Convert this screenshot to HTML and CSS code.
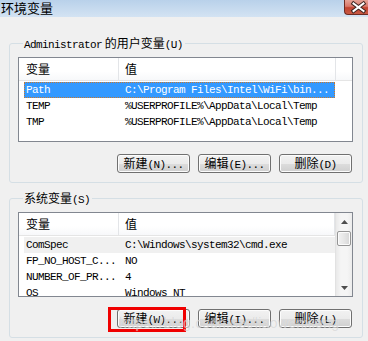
FILE: index.html
```html
<!DOCTYPE html>
<html lang="zh-CN">
<head>
    <meta charset="UTF-8">
    <title>环境变量</title>
    <link rel="stylesheet" href="styles.css">
</head>
<body>

    <div class="window">
        <!-- Title bar -->
        <div class="titlebar">
            <span class="title">环境变量</span>
            <div class="close">
                <svg width="25" height="15" viewBox="0 0 25 15">
                    <path d="M9.5 3.5 L19.5 11 M19.5 3.5 L9.5 11" stroke="#3b2420" stroke-width="4" stroke-linecap="square"/>
                    <path d="M9.5 3.5 L19.5 11 M19.5 3.5 L9.5 11" stroke="#fff" stroke-width="2" stroke-linecap="square"/>
                </svg>
            </div>
        </div>

        <div class="content">
            <!-- User variables -->
            <fieldset class="group">
                <legend><span class="a">Administrator</span> 的用户变量<span class="a">(U)</span></legend>
                <div class="list">
                    <div class="head">
                        <div>变量</div>
                        <div>值</div>
                        <div></div>
                    </div>
                    <div class="rows">
                        <div class="row sel"><div class="a">Path</div><div class="a">C:\Program Files\Intel\WiFi\bin...</div></div>
                        <div class="row"><div class="a">TEMP</div><div class="a">%USERPROFILE%\AppData\Local\Temp</div></div>
                        <div class="row"><div class="a">TMP</div><div class="a">%USERPROFILE%\AppData\Local\Temp</div></div>
                    </div>
                </div>
                <div class="buttons">
                    <button>新建<span class="a">(N)...</span></button>
                    <button>编辑<span class="a">(E)...</span></button>
                    <button>删除<span class="a">(D)</span></button>
                </div>
            </fieldset>

            <!-- System variables -->
            <fieldset class="group group-sys">
                <legend>系统变量<span class="a">(S)</span></legend>
                <div class="list list-scroll">
                    <div class="main">
                        <div class="head head-sys">
                            <div>变量</div>
                            <div>值</div>
                        </div>
                        <div class="rows">
                            <div class="row hot"><div class="a">ComSpec</div><div class="a">C:\Windows\system32\cmd.exe</div></div>
                            <div class="row"><div class="a">FP_NO_HOST_C...</div><div class="a">NO</div></div>
                            <div class="row"><div class="a">NUMBER_OF_PR...</div><div class="a">4</div></div>
                            <div class="row"><div class="a">OS</div><div class="a">Windows_NT</div></div>
                        </div>
                    </div>
                    <div class="vscroll">
                        <div class="arrow">
                            <svg width="7" height="4" viewBox="0 0 7 4"><path d="M0 4 L3.5 0 L7 4 Z" fill="#4d4d4d"/></svg>
                        </div>
                        <div class="thumb"></div>
                        <div class="track"></div>
                        <div class="arrow">
                            <svg width="7" height="4" viewBox="0 0 7 4"><path d="M0 0 L7 0 L3.5 4 Z" fill="#4d4d4d"/></svg>
                        </div>
                    </div>
                </div>
                <div class="buttons">
                    <button>新建<span class="a">(W)...</span></button>
                    <button>编辑<span class="a">(I)...</span></button>
                    <button>删除<span class="a">(L)</span></button>
                </div>
            </fieldset>
        </div>

        <!-- annotation over the screenshot -->
        <div class="marker"></div>
        <div class="watermark">https://blog.csdn.net/liaowenxiong</div>
    </div>

</body>
</html>
```

FILE: styles.css
```css
body {
    margin: 0;
    padding: 0;
    background-color: #f0f0f0;
    font-family: "Noto Sans CJK SC", sans-serif;
    font-size: 12px;
    color: #000;
}
.window {
    position: relative;
    width: 368px;
    height: 341px;
    overflow: hidden;
}
/* ascii text, narrow like the old bitmap font */
.a {
    font-family: "Liberation Mono", monospace;
    font-size: 11px;
    letter-spacing: -0.6px;
}
.titlebar {
    height: 17px;
    display: flex;
    justify-content: space-between;
    background: linear-gradient(#b9d1ea, #d3e3f3);
}
.title {
    font-size: 13px;
    line-height: 16px;
    padding-left: 1px;
    color: #000;
}
.close {
    width: 25px;
    height: 15px;
    border: 1px solid #6e2b22;
    border-top: none;
    border-right: none;
    border-radius: 0 0 0 4px;
    background: linear-gradient(#e6a397 0%, #d9786a 45%, #c24330 55%, #c85a44 100%);
    box-sizing: border-box;
    margin-right: -1px;
}
.close svg {
    display: block;
    margin-left: -1px;
}
.content {
    padding: 19px 5px 0 9px;
}
.group {
    margin: 0;
    padding: 0 9px 9px 8px;
    border: 1px solid #d5dfe5;
    border-radius: 3px;
    min-width: 0;
}
.group legend {
    padding: 0 2px 0 1px;
    margin-left: 5px;
    line-height: 14px;
    height: 14px;
}
.group-sys {
    margin-top: 8px;
}
.list {
    margin-top: 7px;
    height: 85px;
    box-sizing: border-box;
    border: 1px solid #828790;
    background-color: #fff;
    overflow: hidden;
}
.head {
    display: grid;
    grid-template-columns: 100px 217px 1fr;
    height: 22px;
    border-bottom: 1px solid #e5e5e5;
    background: linear-gradient(#fff, #fff 60%, #f7f8fa);
}
.head div {
    line-height: 22px;
    padding-left: 7px;
    border-right: 1px solid #e3e5e8;
}
.head div + div {
    padding-left: 6px;
}
.head div:last-child {
    border-right: none;
}
.head-sys {
    grid-template-columns: 100px 1fr;
}
.head-sys div:last-child {
    border-right: 1px solid #e3e5e8;
}
.rows {
    padding-top: 1px;
}
.row {
    display: grid;
    grid-template-columns: 94px 217px;
    margin-left: 5px;
    width: 311px;
    height: 16px;
    line-height: 16px;
    white-space: nowrap;
}
.row div {
    padding-left: 2px;
    overflow: hidden;
}
.row div + div {
    padding-left: 7px;
}
.row.sel {
    background-color: #3399ff;
    color: #fff;
    outline: 1px dotted #c9782c;
    outline-offset: -1px;
}
.row.hot {
    background-color: #f0f0f0;
}
.list-scroll {
    display: flex;
}
.main {
    flex: 1;
    min-width: 0;
}
.vscroll {
    width: 17px;
    display: flex;
    flex-direction: column;
    background: linear-gradient(to right, #e9e9e9, #f5f5f5 30%, #f5f5f5 70%, #ececec);
    border-left: 1px solid #e2e2e2;
    box-sizing: border-box;
}
.arrow {
    height: 17px;
    display: flex;
    align-items: center;
    justify-content: center;
}
.thumb {
    height: 15px;
    margin: 1px 1px 0 1px;
    border: 1px solid #959595;
    border-radius: 2px;
    background: linear-gradient(to right, #f2f2f2, #e6e6e6 50%, #d6d6d6);
    box-shadow: inset 0 0 0 1px #fbfbfb;
    box-sizing: border-box;
}
.track {
    flex: 1;
}
.buttons {
    display: flex;
    justify-content: flex-end;
    gap: 8px;
    margin-top: 12px;
    margin-right: 1px;
}
.buttons button {
    width: 73px;
    height: 19px;
    padding: 0;
    font-family: "Noto Sans CJK SC", sans-serif;
    font-size: 12px;
    line-height: 15px;
    color: #000;
    border: 1px solid #707070;
    border-radius: 3px;
    background: linear-gradient(#f2f2f2 0%, #ebebeb 50%, #dddddd 50%, #cfcfcf 100%);
    box-shadow: inset 0 0 0 1px #fcfcfc;
}
.marker {
    position: absolute;
    left: 108px;
    top: 307px;
    width: 78px;
    height: 25px;
    border: 3px solid #f00000;
    box-sizing: border-box;
}
.watermark {
    position: absolute;
    left: 119px;
    top: 315px;
    font-family: "Liberation Sans", sans-serif;
    font-size: 14px;
    letter-spacing: 0.3px;
    color: rgba(190, 190, 190, 0.45);
    text-shadow: 0 0 1px rgba(255, 255, 255, 0.6);
}
```
